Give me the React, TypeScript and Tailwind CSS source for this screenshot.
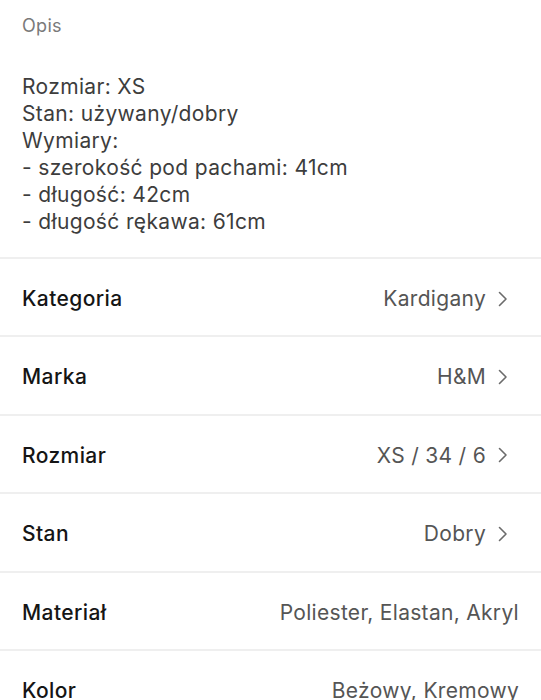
const rows: { label: string; value: string; chevron: boolean }[] = [
  { label: "Kategoria", value: "Kardigany", chevron: true },
  { label: "Marka", value: "H&M", chevron: true },
  { label: "Rozmiar", value: "XS / 34 / 6", chevron: true },
  { label: "Stan", value: "Dobry", chevron: true },
  { label: "Materiał", value: "Poliester, Elastan, Akryl", chevron: false },
  { label: "Kolor", value: "Beżowy, Kremowy", chevron: false },
]

const description = [
  "Rozmiar: XS",
  "Stan: używany/dobry",
  "Wymiary:",
  "- szerokość pod pachami: 41cm",
  "- długość: 42cm",
  "- długość rękawa: 61cm",
]

function Chevron() {
  return (
    <svg width="12" height="16" viewBox="0 0 12 16" fill="none" className="ml-[11px] mr-[10px]">
      <path d="M2.5 1.5 L9 8 L2.5 14.5" stroke="#6b6b6b" strokeWidth="1.6" strokeLinecap="round" strokeLinejoin="round" />
    </svg>
  )
}

export default function App() {
  return (
    <div className="w-[541px] h-[700px] overflow-hidden bg-white font-['Inter',sans-serif] tracking-[0.3px]">
      <section className="px-[22px] pt-[14px] pb-[22px]">
        <p className="text-[18px] leading-[24px] text-[#7a7a7a]">Opis</p>
        <div className="mt-[35px] text-[21px] leading-[27px] tracking-[0.35px] text-[#3d3d3d]">
          {description.map((line) => (
            <p key={line}>{line}</p>
          ))}
        </div>
      </section>
      <ul>
        {rows.map((row) => (
          <li
            key={row.label}
            className="flex h-[78.4px] items-center justify-between border-t-2 border-[#efefef] pt-[3px] pl-[22px] pr-[22px]"
          >
            <span className="text-[21px] font-medium tracking-[0.4px] text-[#151515]">{row.label}</span>
            <span className="flex items-center text-[21px] text-[#555555]">
              {row.value}
              {row.chevron && <Chevron />}
            </span>
          </li>
        ))}
      </ul>
    </div>
  )
}
